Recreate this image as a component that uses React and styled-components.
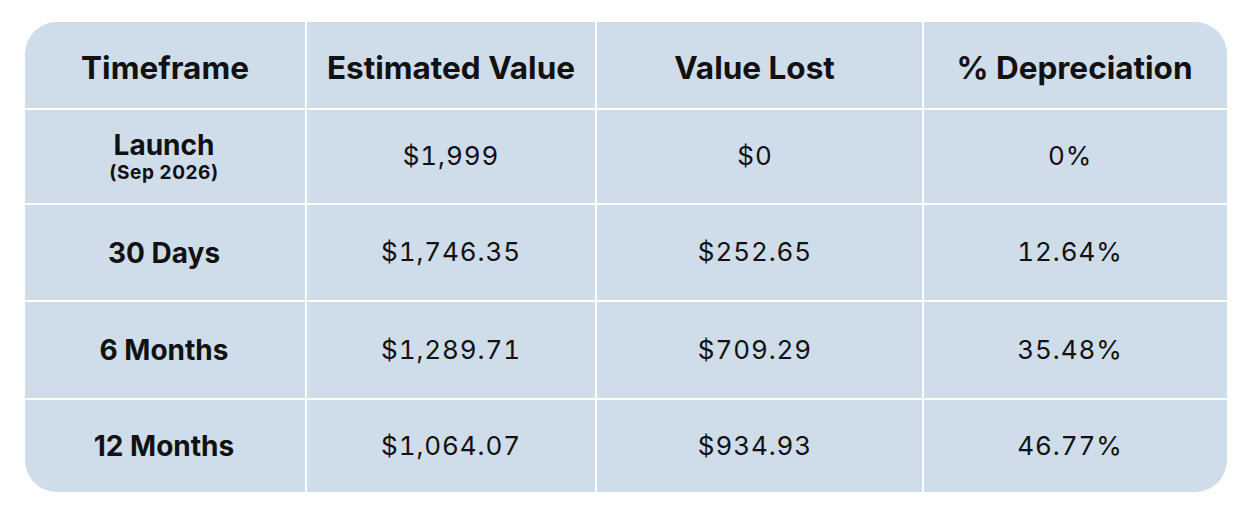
import React from "react";
import styled, { createGlobalStyle } from "styled-components";

const Global = createGlobalStyle`
  html, body { margin: 0; padding: 0; background: #ffffff; }
  body { font-family: Inter, "Noto Sans", sans-serif; color: #111111; }
`;

const Page = styled.div`
  width: 1252px;
  height: 511px;
  padding: 22px 25px 0 25px;
  box-sizing: border-box;
`;

const Table = styled.div`
  display: grid;
  grid-template-columns: 280px 288px 325px 303px;
  grid-template-rows: 86px 93px 95px 96px 92px;
  gap: 2px;
  width: 1202px;
  background: #ffffff;
  border-radius: 32px;
  overflow: hidden;
`;

const Cell = styled.div`
  background: #cfdce9;
  display: flex;
  flex-direction: column;
  align-items: center;
  justify-content: center;
  text-align: center;
  color: #111111;
  line-height: 1.1;
  box-sizing: border-box;
  padding-right: ${(p) => p.$shift || 0}px;
`;

const HeadCell = styled(Cell)`
  font-size: 31.5px;
  font-weight: 700;
  padding-top: 6px;
`;

const LabelCell = styled(Cell)`
  font-size: 28px;
  font-weight: 700;
`;

const ValueCell = styled(Cell)`
  font-size: 26px;
  font-weight: 400;
  font-feature-settings: "tnum" 1;
  letter-spacing: 0.9px;
`;

const Main = styled.span`
  line-height: 1;
`;

const Sub = styled.span`
  font-size: 19px;
  font-weight: 700;
  letter-spacing: 0.6px;
  line-height: 1;
  margin-top: 4px;
`;

const headers = [
  ["Timeframe", 0],
  ["Estimated Value", 0],
  ["Value Lost", 10],
  ["% Depreciation", 2],
];
const valueShift = [0, 9, 11];
const rows = [
  [["Launch", "(Sep 2026)"], "$1,999", "$0", "0%"],
  [["30 Days"], "$1,746.35", "$252.65", "12.64%"],
  [["6 Months"], "$1,289.71", "$709.29", "35.48%"],
  [["12 Months"], "$1,064.07", "$934.93", "46.77%"],
];

export default function App() {
  return (
    <>
      <Global />
      <Page>
        <Table>
          {headers.map(([h, s]) => (
            <HeadCell key={h} $shift={s}>
              {h}
            </HeadCell>
          ))}
          {rows.map(([label, ...values]) => (
            <React.Fragment key={label[0]}>
              <LabelCell $shift={2}>
                <Main>{label[0]}</Main>
                {label[1] && <Sub>{label[1]}</Sub>}
              </LabelCell>
              {values.map((v, i) => (
                <ValueCell key={i} $shift={valueShift[i]}>
                  {v}
                </ValueCell>
              ))}
            </React.Fragment>
          ))}
        </Table>
      </Page>
    </>
  );
}
